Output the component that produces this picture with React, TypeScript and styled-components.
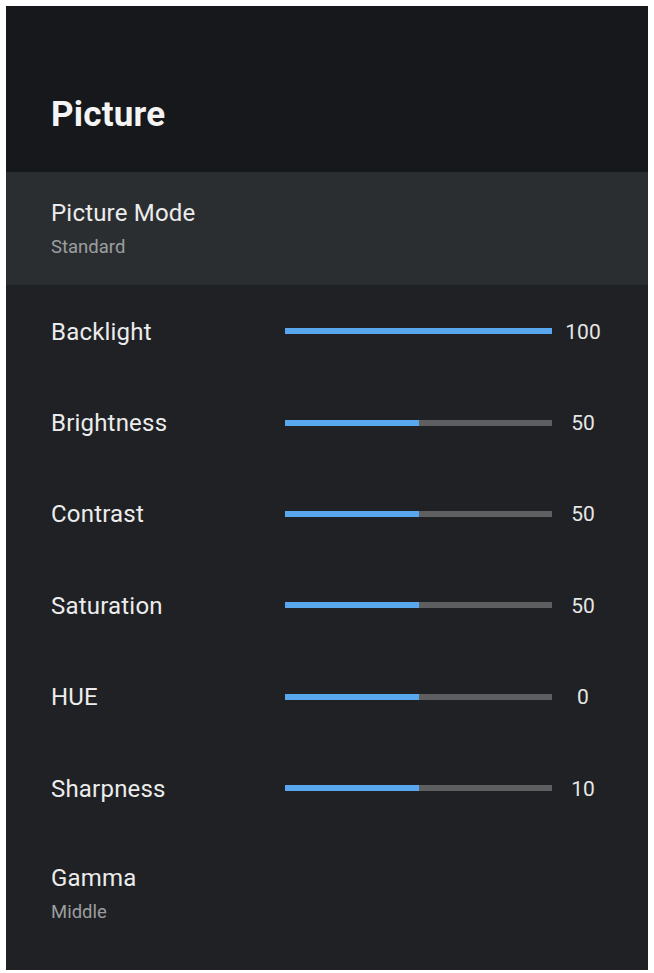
import React from 'react';
import styled, { createGlobalStyle } from 'styled-components';

const GlobalStyle = createGlobalStyle`
  html, body {
    margin: 0;
    padding: 0;
    background: #ffffff;
  }
  body {
    font-family: Roboto, "Noto Sans", "Liberation Sans", sans-serif;
  }
`;

const Page = styled.div`
  padding: 6px 6px 3px 6px;
`;

const Panel = styled.div`
  width: 642px;
  height: 964px;
  background: #1f2124;
  display: flex;
  flex-direction: column;
  overflow: hidden;
`;

const Header = styled.header`
  height: 166px;
  box-sizing: border-box;
  padding: 88px 0 0 45px;
  background: #16181b;
`;

const Title = styled.h1`
  margin: 0;
  font-size: 35px;
  line-height: 42px;
  font-weight: 700;
  letter-spacing: 0.2px;
  color: #f4f4f4;
`;

const Item = styled.div<{ $active?: boolean; $top: number }>`
  height: 113px;
  box-sizing: border-box;
  padding: ${p => p.$top}px 0 0 45px;
  display: flex;
  flex-direction: column;
  gap: 7px;
  background: ${p => (p.$active ? '#2b2e31' : 'transparent')};
`;

const ItemTitle = styled.div`
  font-size: 24px;
  line-height: 30px;
  letter-spacing: 0.2px;
  color: #ececec;
`;

const ItemValue = styled.div`
  font-size: 18.5px;
  line-height: 24px;
  color: #9c9ea0;
`;

const SliderList = styled.div`
  padding-top: 1px;
  display: flex;
  flex-direction: column;
`;

const SliderRow = styled.div`
  height: 91.4px;
  display: grid;
  grid-template-columns: 226px 267px 46px;
  column-gap: 8px;
  align-items: center;
  padding-left: 45px;
`;

const Label = styled.div`
  font-size: 24px;
  line-height: 30px;
  letter-spacing: 0.2px;
  color: #ececec;
`;

const Track = styled.div`
  height: 6px;
  background: #5d5f61;
  margin-top: -1px;
`;

const Fill = styled.div`
  height: 100%;
  background: #59a7ee;
`;

const Value = styled.div`
  font-size: 21px;
  line-height: 30px;
  text-align: center;
  color: #e6e6e6;
`;

type Setting = { label: string; value: number; fill: number };

const sliders: Setting[] = [
  { label: 'Backlight', value: 100, fill: 100 },
  { label: 'Brightness', value: 50, fill: 50 },
  { label: 'Contrast', value: 50, fill: 50 },
  { label: 'Saturation', value: 50, fill: 50 },
  { label: 'HUE', value: 0, fill: 50 },
  { label: 'Sharpness', value: 10, fill: 50 },
];

export default function App() {
  return (
    <Page>
      <GlobalStyle />
      <Panel>
        <Header>
          <Title>Picture</Title>
        </Header>
        <Item $active $top={26}>
          <ItemTitle>Picture Mode</ItemTitle>
          <ItemValue>Standard</ItemValue>
        </Item>
        <SliderList>
          {sliders.map(s => (
            <SliderRow key={s.label}>
              <Label>{s.label}</Label>
              <Track>
                <Fill style={{ width: `${s.fill}%` }} />
              </Track>
              <Value>{s.value}</Value>
            </SliderRow>
          ))}
        </SliderList>
        <Item $top={29}>
          <ItemTitle>Gamma</ItemTitle>
          <ItemValue>Middle</ItemValue>
        </Item>
      </Panel>
    </Page>
  );
}
